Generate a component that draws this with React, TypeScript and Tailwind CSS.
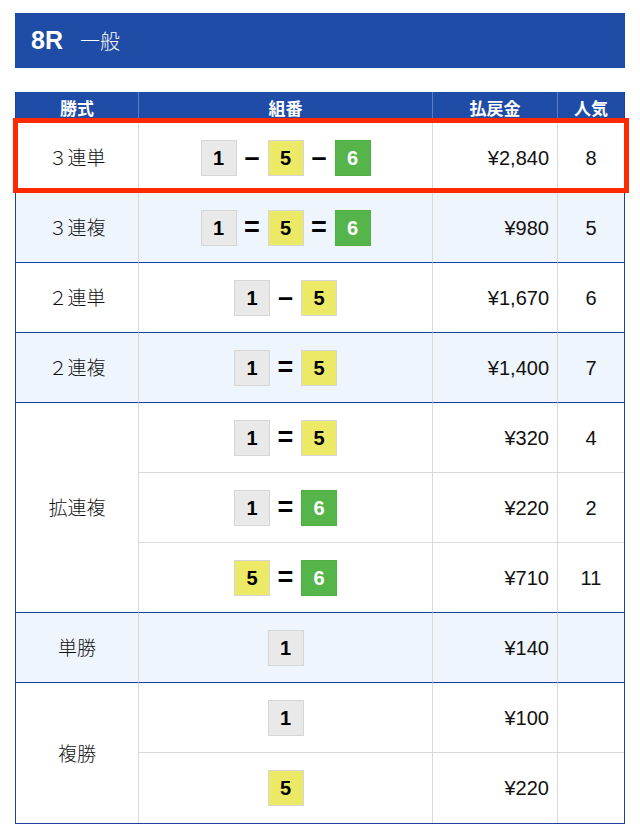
import React from 'react';

type Row = { combo: number[]; sep: string; pay: string; pop: string };
type Group = { name: string; light: boolean; rows: Row[] };

const groups: Group[] = [
  { name: '３連単', light: false, rows: [{ combo: [1, 5, 6], sep: '–', pay: '¥2,840', pop: '8' }] },
  { name: '３連複', light: true, rows: [{ combo: [1, 5, 6], sep: '=', pay: '¥980', pop: '5' }] },
  { name: '２連単', light: false, rows: [{ combo: [1, 5], sep: '–', pay: '¥1,670', pop: '6' }] },
  { name: '２連複', light: true, rows: [{ combo: [1, 5], sep: '=', pay: '¥1,400', pop: '7' }] },
  {
    name: '拡連複',
    light: false,
    rows: [
      { combo: [1, 5], sep: '=', pay: '¥320', pop: '4' },
      { combo: [1, 6], sep: '=', pay: '¥220', pop: '2' },
      { combo: [5, 6], sep: '=', pay: '¥710', pop: '11' },
    ],
  },
  { name: '単勝', light: true, rows: [{ combo: [1], sep: '', pay: '¥140', pop: '' }] },
  {
    name: '複勝',
    light: false,
    rows: [
      { combo: [1], sep: '', pay: '¥100', pop: '' },
      { combo: [5], sep: '', pay: '¥220', pop: '' },
    ],
  },
];

const boxColor: Record<number, string> = {
  1: 'bg-[#e9e9e9] text-black border-[#d6d6d6]',
  5: 'bg-[#ebe965] text-black border-[#d6d6d6]',
  6: 'bg-[#55b54b] text-white border-[#4fae45]',
};

const Boat = ({ n }: { n: number }) => (
  <span className={`flex h-9 w-9 items-center justify-center border text-[20px] font-bold ${boxColor[n]}`}>
    {n}
  </span>
);

const Combo = ({ combo, sep }: { combo: number[]; sep: string }) => (
  <div className="flex items-center justify-center">
    {combo.map((n, i) => (
      <React.Fragment key={i}>
        {i > 0 && (
          <span className="w-[31px] text-center text-[27px] leading-none font-bold text-black">{sep}</span>
        )}
        <Boat n={n} />
      </React.Fragment>
    ))}
  </div>
);

const App = () => {
  return (
    <div className="w-[640px] h-[835px] bg-white font-['Liberation_Sans','Noto_Sans_CJK_JP',sans-serif] text-[#111]">
      {/* Race title */}
      <div className="mx-[15px] mt-[13px] flex h-[55px] items-center bg-[#1e4ca6] pl-[16px] text-white">
        <span className="text-[25px] font-bold">8R</span>
        <span className="ml-[17px] text-[20px] font-['Noto_Sans_CJK_JP',sans-serif] font-light">一般</span>
      </div>

      {/* Payout table */}
      <div className="relative mx-[15px] mt-[24px] border-x border-b border-[#1e3f9f]">
        <table className="w-full table-fixed border-separate border-spacing-0">
          <colgroup>
            <col className="w-[123px]" />
            <col className="w-[294px]" />
            <col className="w-[125px]" />
            <col />
          </colgroup>
          <thead>
            <tr className="h-[31px] bg-[#1e4ca6] text-[17px] font-bold text-white font-['Noto_Sans_CJK_JP',sans-serif]">
              <th className="border-r border-[#5b7cc4] font-bold">勝式</th>
              <th className="border-r border-[#5b7cc4] font-bold">組番</th>
              <th className="border-r border-[#5b7cc4] font-bold">払戻金</th>
              <th className="font-bold">人気</th>
            </tr>
          </thead>
          <tbody>
            {groups.map((g, gi) =>
              g.rows.map((r, ri) => {
                const lastInGroup = ri === g.rows.length - 1;
                const lastRow = gi === groups.length - 1 && lastInGroup;
                const bottom = lastRow
                  ? 'border-b-0'
                  : lastInGroup
                  ? 'border-b border-b-[#1e3f9f]'
                  : 'border-b border-b-[#d9d9d9]';
                const groupBottom = gi === groups.length - 1 ? 'border-b-0' : 'border-b border-b-[#1e3f9f]';
                return (
                  <tr key={`${gi}-${ri}`} className={`h-[70px] ${g.light ? 'bg-[#eff5fd]' : 'bg-white'}`}>
                    {ri === 0 && (
                      <td
                        rowSpan={g.rows.length}
                        className={`border-r border-r-[#d9d9d9] text-center text-[19px] font-['Noto_Sans_CJK_JP',sans-serif] font-light ${groupBottom}`}
                      >
                        {g.name}
                      </td>
                    )}
                    <td className={`border-r border-r-[#d9d9d9] ${bottom}`}>
                      <Combo combo={r.combo} sep={r.sep} />
                    </td>
                    <td className={`border-r border-r-[#d9d9d9] pr-[8px] text-right text-[20px] ${bottom}`}>{r.pay}</td>
                    <td className={`text-center text-[20px] ${bottom}`}>{r.pop}</td>
                  </tr>
                );
              })
            )}
          </tbody>
        </table>

        {/* Highlight frame */}
        <div className="pointer-events-none absolute left-[-3px] top-[26px] h-[75px] w-[616px] border-[5px] border-[#ff2a00]" />
      </div>
    </div>
  );
};

export default App;
